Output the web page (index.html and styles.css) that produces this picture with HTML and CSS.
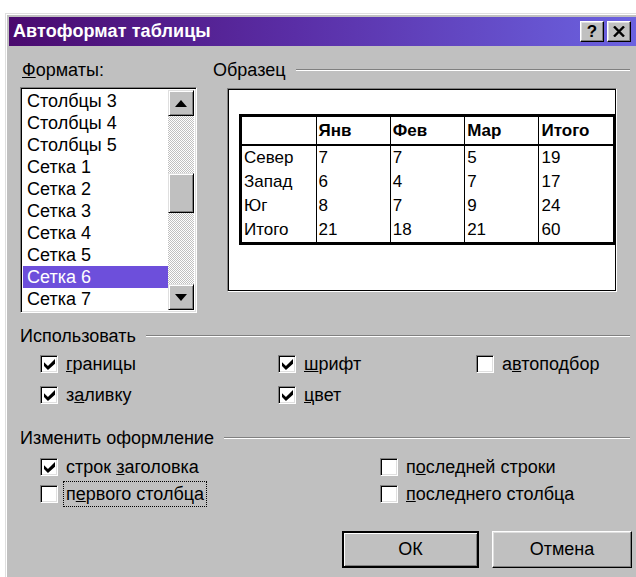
FILE: index.html
```html
<!DOCTYPE html>
<html lang="ru">
<head>
<meta charset="utf-8">
<title>Автоформат таблицы</title>
<link rel="stylesheet" href="styles.css">
</head>
<body>
<div class="dialog">
  <div class="titlebar">
    <span class="title">Автоформат таблицы</span>
    <span class="tb-buttons">
      <span class="tb-btn">?</span>
      <span class="tb-btn close">
        <svg width="12" height="11" viewBox="0 0 12 11"><path d="M1 0.5 L11 10.5 M11 0.5 L1 10.5" stroke="#000" stroke-width="2.4" fill="none"/></svg>
      </span>
    </span>
  </div>

  <div class="content">
    <div class="top">
      <div class="formats">
        <div class="label"><u>Ф</u>орматы:</div>
        <div class="listbox">
          <ul class="items">
            <li>Столбцы 3</li>
            <li>Столбцы 4</li>
            <li>Столбцы 5</li>
            <li>Сетка 1</li>
            <li>Сетка 2</li>
            <li>Сетка 3</li>
            <li>Сетка 4</li>
            <li>Сетка 5</li>
            <li class="selected">Сетка 6</li>
            <li>Сетка 7</li>
          </ul>
          <div class="scrollbar">
            <div class="sb-btn"><svg width="12" height="7" viewBox="0 0 12 7"><path d="M6 0 L12 7 L0 7 Z" fill="#000"/></svg></div>
            <div class="track"><div class="thumb"></div></div>
            <div class="sb-btn"><svg width="12" height="7" viewBox="0 0 12 7"><path d="M0 0 L12 0 L6 7 Z" fill="#000"/></svg></div>
          </div>
        </div>
      </div>

      <div class="sample">
        <div class="group-head"><span>Образец</span><span class="rule"></span></div>
        <div class="preview">
          <table class="grid">
            <thead>
              <tr><th></th><th>Янв</th><th>Фев</th><th>Мар</th><th>Итого</th></tr>
            </thead>
            <tbody>
              <tr><td>Север</td><td>7</td><td>7</td><td>5</td><td>19</td></tr>
              <tr><td>Запад</td><td>6</td><td>4</td><td>7</td><td>17</td></tr>
              <tr><td>Юг</td><td>8</td><td>7</td><td>9</td><td>24</td></tr>
              <tr><td>Итого</td><td>21</td><td>18</td><td>21</td><td>60</td></tr>
            </tbody>
          </table>
        </div>
      </div>
    </div>

    <div class="group use">
      <div class="group-head"><span>Использовать</span><span class="rule"></span></div>
      <div class="checks checks-use">
        <label class="check"><span class="box on"></span><span class="text"><u>г</u>раницы</span></label>
        <label class="check"><span class="box on"></span><span class="text"><u>ш</u>рифт</span></label>
        <label class="check"><span class="box"></span><span class="text">а<u>в</u>топодбор</span></label>
        <label class="check"><span class="box on"></span><span class="text">з<u>а</u>ливку</span></label>
        <label class="check"><span class="box on"></span><span class="text"><u>ц</u>вет</span></label>
      </div>
    </div>

    <div class="group change">
      <div class="group-head"><span>Изменить оформление</span><span class="rule"></span></div>
      <div class="checks checks-change">
        <label class="check"><span class="box on"></span><span class="text">строк <u>з</u>аголовка</span></label>
        <label class="check"><span class="box"></span><span class="text">п<u>о</u>следней строки</span></label>
        <label class="check"><span class="box"></span><span class="text focus">п<u>е</u>рвого столбца</span></label>
        <label class="check"><span class="box"></span><span class="text"><u>п</u>оследнего столбца</span></label>
      </div>
    </div>

    <div class="actions">
      <button class="btn default">ОК</button>
      <button class="btn">Отмена</button>
    </div>
  </div>
</div>
</body>
</html>
```

FILE: styles.css
```css
html, body {
  margin: 0;
  padding: 0;
  background: #fff;
  overflow: hidden;
}

body {
  padding: 13px 0 0 5px;
  font-family: "Liberation Sans", Arial, sans-serif;
  font-size: 18px;
  color: #000;
}

/* window frame */
.dialog {
  width: 640px;
  height: 580px;
  box-sizing: border-box;
  background: #c0c0c0;
  border-top: 1px solid #dfdfdf;
  border-left: 1px solid #dfdfdf;
  box-shadow: inset 1px 1px #fff;
  padding: 3px 0 0 2px;
}

.titlebar {
  height: 29px;
  margin-left: 1px;
  background: linear-gradient(90deg, #4a0a6e 0%, #5a2ea6 45%, #6c64e2 100%);
  display: flex;
  align-items: center;
  justify-content: space-between;
  padding: 0 14px 0 4px;
}

.title {
  color: #fff;
  font-weight: bold;
  font-size: 18px;
  letter-spacing: 0.1px;
}

.tb-buttons {
  display: flex;
  gap: 3px;
}

.tb-btn {
  width: 24px;
  height: 21px;
  box-sizing: border-box;
  background: #c0c0c0;
  border: 1px solid;
  border-color: #fff #000 #000 #fff;
  box-shadow: inset -1px -1px #808080, inset 1px 1px #dfdfdf;
  display: flex;
  align-items: center;
  justify-content: center;
  font-weight: bold;
  font-size: 17px;
  line-height: 1;
}

.content {
  padding: 15px 0 0 12px;
  width: 610px;
}

.top {
  display: flex;
  gap: 16px;
}

.label {
  height: 18px;
  line-height: 18px;
  padding-left: 2px;
}

/* list box */
.formats {
  width: 177px;
}

.listbox {
  margin-top: 8px;
  height: 226px;
  box-sizing: border-box;
  border: 1px solid;
  border-color: #808080 #fff #fff #808080;
  box-shadow: inset 1px 1px #000, inset -1px -1px #dfdfdf;
  padding: 2px 2px 2px 2px;
  display: flex;
  background: #fff;
}

.items {
  list-style: none;
  margin: 0;
  padding: 0;
  flex: 1;
  overflow: hidden;
}

.items li {
  height: 22px;
  line-height: 22px;
  padding-left: 4px;
  white-space: nowrap;
}

.items li.selected {
  background: #6d4fdb;
  color: #fff;
}

.scrollbar {
  width: 26px;
  display: flex;
  flex-direction: column;
}

.sb-btn {
  height: 26px;
  box-sizing: border-box;
  background: #c0c0c0;
  border: 1px solid;
  border-color: #dfdfdf #000 #000 #dfdfdf;
  box-shadow: inset 1px 1px #fff, inset -1px -1px #808080;
  display: flex;
  align-items: center;
  justify-content: center;
}

.track {
  flex: 1;
  background-color: #c0c0c0;
  background-image: conic-gradient(#fff 25%, #c0c0c0 0 50%, #fff 0 75%, #c0c0c0 0);
  background-size: 2px 2px;
}

.thumb {
  margin-top: 57px;
  height: 40px;
  box-sizing: border-box;
  background: #c0c0c0;
  border: 1px solid;
  border-color: #dfdfdf #000 #000 #dfdfdf;
  box-shadow: inset 1px 1px #fff, inset -1px -1px #808080;
}

/* sample */
.sample {
  flex: 1;
}

.group-head {
  display: flex;
  align-items: center;
  gap: 10px;
  height: 18px;
  line-height: 18px;
}

.group-head .rule {
  flex: 1;
  height: 0;
  border-top: 1px solid #808080;
  border-bottom: 1px solid #fff;
  margin-top: -1px;
}

.preview {
  margin: 9px 13px 0 14px;
  width: 390px;
  height: 204px;
  box-sizing: border-box;
  background: #fff;
  border: 1px solid;
  border-color: #808080 #fff #fff #808080;
  box-shadow: inset 1px 1px #000, inset -1px -1px #000;
  padding: 25px 0 0 11px;
}

.grid {
  border-collapse: collapse;
  border: 3px solid #000;
  font-family: "Liberation Sans", Arial, sans-serif;
  font-size: 17px;
}

.grid th, .grid td {
  width: 72px;
  padding: 0 0 0 2px;
  text-align: left;
  border-left: 1px solid #000;
}

.grid th {
  height: 27px;
  font-weight: bold;
  border-bottom: 2px solid #000;
}

.grid td {
  height: 24px;
  line-height: 24px;
}

.grid tr > :first-child {
  border-left: none;
}

/* check box groups */
.group.use {
  margin-top: 14px;
}

.group.change {
  margin-top: 25px;
}

.checks {
  display: grid;
  padding-left: 20px;
  margin-top: 10px;
}

.checks-use {
  grid-template-columns: 238px 198px 1fr;
  row-gap: 13px;
}

.checks-use .check:nth-child(4) {
  grid-column: 1;
}

.checks-change {
  grid-template-columns: 340px 1fr;
  margin-top: 11px;
  row-gap: 9px;
}

.check {
  display: flex;
  align-items: center;
  gap: 5px;
  height: 18px;
}

.box {
  width: 18px;
  height: 18px;
  box-sizing: border-box;
  background: #fff;
  border: 1px solid;
  border-color: #808080 #fff #fff #808080;
  box-shadow: inset 1px 1px #000, inset -1px -1px #dfdfdf;
  flex: none;
  position: relative;
}

/* the tick inside a checked box */
.box.on::after {
  content: "";
  position: absolute;
  left: 3px;
  top: 3px;
  width: 11px;
  height: 11px;
  background: #000;
  clip-path: polygon(0 29%, 36% 64%, 100% 0, 100% 43%, 36% 100%, 0 64%);
}

.text {
  padding: 2px 2px;
  border: 1px dotted transparent;
  line-height: 20px;
  white-space: nowrap;
}

.text.focus {
  border-color: #000;
}

/* command buttons */
.actions {
  display: flex;
  justify-content: flex-end;
  gap: 13px;
  margin-top: 28px;
  margin-right: -2px;
}

.btn {
  width: 140px;
  height: 37px;
  font-family: "Liberation Sans", Arial, sans-serif;
  font-size: 18px;
  color: #000;
  background: #c0c0c0;
  border: 1px solid;
  border-color: #fff #000 #000 #fff;
  box-shadow: inset -1px -1px #808080, inset 1px 1px #dfdfdf;
  padding: 0;
}

.btn.default {
  width: 137px;
  border: 2px solid #000;
  box-shadow: inset 1px 1px #fff, inset -1px -1px #808080;
}
```
